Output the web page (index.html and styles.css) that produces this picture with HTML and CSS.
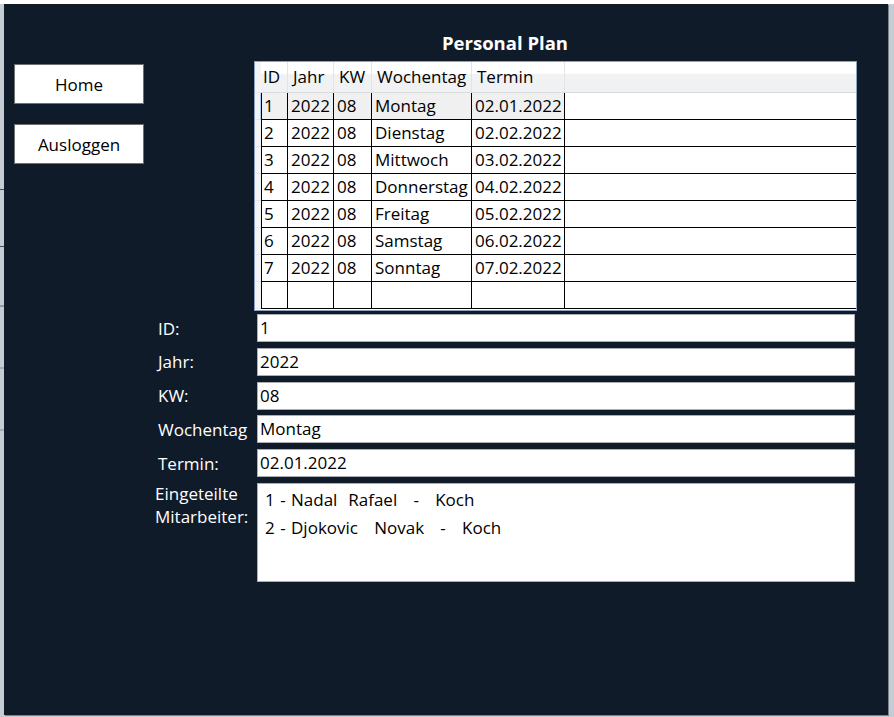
FILE: index.html
```html
<!DOCTYPE html>
<html lang="de">
<head>
<meta charset="utf-8">
<title>Personal Plan</title>
<link rel="stylesheet" href="styles.css">
</head>
<body>
<div class="frame">
  <main class="panel">
    <h1 class="title">Personal Plan</h1>
    <div class="top">
      <nav class="sidebar">
        <button class="btn">Home</button>
        <button class="btn">Ausloggen</button>
      </nav>
      <div class="grid">
        <div class="rh hd"></div>
        <div class="hc hc-id">ID</div>
        <div class="hc">Jahr</div>
        <div class="hc">KW</div>
        <div class="hc">Wochentag</div>
        <div class="hc">Termin</div>
        <div class="hc hc-fill"></div>

        <div class="rh rh-sel"></div>
        <div class="c c-id sel">1</div><div class="c sel">2022</div><div class="c sel">08</div><div class="c sel">Montag</div><div class="c sel">02.01.2022</div><div class="c c-fill"></div>

        <div class="rh"></div>
        <div class="c c-id">2</div><div class="c">2022</div><div class="c">08</div><div class="c">Dienstag</div><div class="c">02.02.2022</div><div class="c c-fill"></div>

        <div class="rh"></div>
        <div class="c c-id">3</div><div class="c">2022</div><div class="c">08</div><div class="c">Mittwoch</div><div class="c">03.02.2022</div><div class="c c-fill"></div>

        <div class="rh"></div>
        <div class="c c-id">4</div><div class="c">2022</div><div class="c">08</div><div class="c">Donnerstag</div><div class="c">04.02.2022</div><div class="c c-fill"></div>

        <div class="rh"></div>
        <div class="c c-id">5</div><div class="c">2022</div><div class="c">08</div><div class="c">Freitag</div><div class="c">05.02.2022</div><div class="c c-fill"></div>

        <div class="rh"></div>
        <div class="c c-id">6</div><div class="c">2022</div><div class="c">08</div><div class="c">Samstag</div><div class="c">06.02.2022</div><div class="c c-fill"></div>

        <div class="rh"></div>
        <div class="c c-id">7</div><div class="c">2022</div><div class="c">08</div><div class="c">Sonntag</div><div class="c">07.02.2022</div><div class="c c-fill"></div>

        <div class="rh"></div>
        <div class="c c-id"></div><div class="c"></div><div class="c"></div><div class="c"></div><div class="c"></div><div class="c c-fill"></div>
      </div>
    </div>

    <form class="form">
      <label class="lbl">ID:</label>
      <div class="inp">1</div>
      <label class="lbl">Jahr:</label>
      <div class="inp">2022</div>
      <label class="lbl">KW:</label>
      <div class="inp">08</div>
      <label class="lbl">Wochentag</label>
      <div class="inp">Montag</div>
      <label class="lbl">Termin:</label>
      <div class="inp">02.01.2022</div>
      <label class="lbl lbl-multi">Eingeteilte<br>Mitarbeiter:</label>
      <ul class="list">
        <li class="item">1 - Nadal  Rafael   -   Koch</li>
        <li class="item">2 - Djokovic   Novak   -   Koch</li>
      </ul>
    </form>
  </main>
</div>
</body>
</html>
```

FILE: styles.css
```css
* {
  box-sizing: border-box;
}

html, body {
  margin: 0;
  padding: 0;
}

body {
  font-family: "Open Sans", "Noto Sans", sans-serif;
  font-size: 17px;
  color: #000;
  background: #c5ccd4;
}

.frame {
  width: 894px;
  height: 717px;
  padding: 4px 6px 2px 4px;
  background:
    linear-gradient(#ffffff, #ffffff) 0 0 / 100% 4px no-repeat,
    linear-gradient(#3e4c66, #3e4c66) 0 189px / 4px 1px no-repeat,
    linear-gradient(#3e4c66, #3e4c66) 0 246px / 4px 1px no-repeat,
    linear-gradient(#8e9aae, #8e9aae) 0 305px / 4px 2px no-repeat,
    linear-gradient(#a3adbd, #a3adbd) 0 367px / 4px 2px no-repeat,
    linear-gradient(#a3adbd, #a3adbd) 0 429px / 4px 2px no-repeat,
    #c5ccd4;
}

.panel {
  height: 100%;
  background: #101b2a;
  padding: 27px 0 0 10px;
  box-shadow: 1px 1px 0 #7b848e;
}

.title {
  margin: 0 0 0 428px;
  height: 24px;
  line-height: 24px;
  font-size: 18.5px;
  font-weight: 700;
  color: #ffffff;
}

.top {
  display: flex;
  align-items: flex-start;
  margin-top: 6px;
}

.sidebar {
  display: flex;
  flex-direction: column;
  gap: 20px;
  width: 130px;
  margin-top: 3px;
}

.btn {
  width: 130px;
  height: 40px;
  background: #ffffff;
  border: 1px solid #707070;
  font-family: inherit;
  font-size: 17px;
  color: #000;
  padding: 0;
  margin: 0;
}

.grid {
  margin-left: 110px;
  width: 603px;
  display: grid;
  grid-template-columns: 6px 27px 46px 38px 100px 93px 1fr;
  grid-template-rows: 31px;
  grid-auto-rows: 27px;
  background: #ffffff;
  border: 1px solid #8ba3c1;
  padding-bottom: 1px;
}

.hd,
.hc {
  background: linear-gradient(#ffffff 0, #ffffff 38%, #f1f2f4 40%, #f0f1f3 100%);
  border-bottom: 1px solid #d9dadc;
}

.hc {
  border-right: 1px solid #e3e4e6;
  padding-left: 5px;
  line-height: 30px;
  white-space: nowrap;
  overflow: hidden;
}

.hc-id {
  padding-left: 2px;
}

.hc-fill {
  border-right: 0;
}

.rh {
  background: #f3f4f6;
  border-bottom: 1px solid #e6e7ea;
}

.rh-sel {
  border-right: 1px solid #a8d0f0;
}

.c {
  border-right: 1px solid #000;
  border-bottom: 1px solid #000;
  padding-left: 3px;
  line-height: 26px;
  white-space: nowrap;
  overflow: hidden;
}

.c-id {
  border-left: 1px solid #000;
  padding-left: 2px;
}

.c-fill {
  border-right: 0;
}

.sel {
  background: #f0f0f0;
}

.form {
  display: grid;
  grid-template-columns: 99px 598px;
  grid-auto-rows: 28px;
  row-gap: 5.75px;
  margin: 3px 0 0 144px;
}

.lbl {
  color: #ffffff;
  align-self: center;
  line-height: 23px;
  white-space: nowrap;
}

.lbl-multi {
  align-self: start;
  margin: -1px 0 0 -3px;
}

.inp {
  background: #ffffff;
  border: 1px solid #abadb3;
  padding-left: 2px;
  line-height: 26px;
}

.list {
  height: 99px;
  margin: 0;
  padding: 2px 0 0 7px;
  list-style: none;
  background: #ffffff;
  border: 1px solid #abadb3;
}

.item {
  line-height: 28px;
  white-space: pre;
  word-spacing: 1px;
}
```
